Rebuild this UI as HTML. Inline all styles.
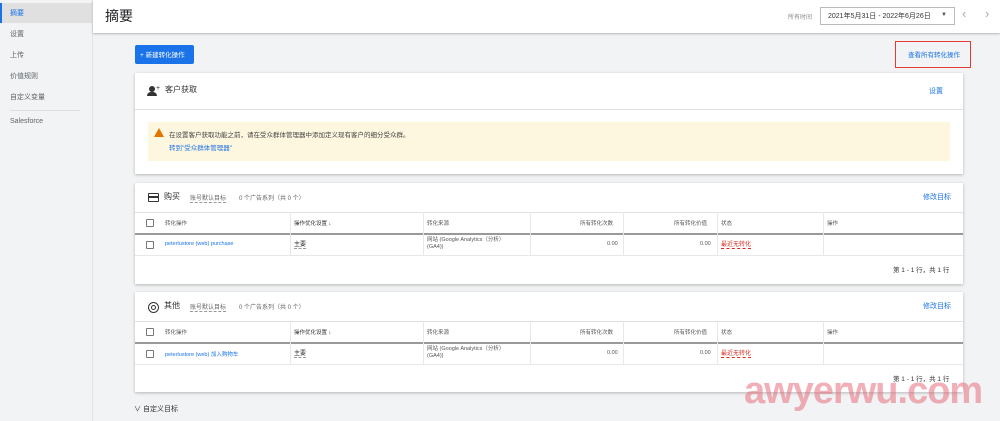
<!DOCTYPE html>
<html><head><meta charset="utf-8"><style>
*{margin:0;padding:0;box-sizing:border-box}
body{width:1000px;height:421px;overflow:hidden;background:#f1f3f4;font-family:"Liberation Sans","Noto Sans CJK SC",sans-serif;color:#3c4043;position:relative;font-size:7px}
.a{position:absolute;white-space:nowrap}
.side{left:0;top:0;width:93px;height:421px;background:#f1f3f4;border-right:1px solid #e4e4e4}
.si{left:10px;font-size:7px;color:#5f6368}
.hdr{left:93px;top:0;width:907px;height:33px;background:#fff;box-shadow:0 1px 2px rgba(0,0,0,.25)}
.card{background:#fff;box-shadow:0 1px 3px rgba(0,0,0,.25)}
.lk{color:#1a73e8}
.cb{width:8px;height:8px;border:1px solid #777;border-radius:1px}
.vl{width:1px;background:#e8e8e8}
.dot{border-bottom:1px dashed #999}
</style></head><body>
<div class="a side"></div>
<div class="a" style="left:0;top:3px;width:92px;height:20px;background:#e0e0e0"></div>
<div class="a" style="left:0;top:3px;width:2px;height:20px;background:#1a73e8"></div>
<div class="a si" style="top:8px;color:#1a73e8">摘要</div>
<div class="a si" style="top:29px">设置</div>
<div class="a si" style="top:50px">上传</div>
<div class="a si" style="top:71px">价值规则</div>
<div class="a si" style="top:92px">自定义变量</div>
<div class="a" style="left:10px;top:110px;width:70px;height:1px;background:#ddd"></div>
<div class="a si" style="top:118px">Salesforce</div>

<div class="a hdr"></div>
<div class="a" style="left:105px;top:6px;font-size:14px;color:#202124">摘要</div>
<div class="a" style="left:788px;top:12px;font-size:6px;color:#888">所有时间</div>
<div class="a" style="left:820px;top:7px;width:135px;height:18px;border:1px solid #bbb;background:#fff"></div>
<div class="a" style="left:828px;top:11px;font-size:7px;color:#333">2021年5月31日 - 2022年6月26日</div>
<div class="a" style="left:941px;top:12px;font-size:6px;color:#555">▼</div>
<div class="a" style="left:962px;top:6px;font-size:13px;color:#aaa">‹</div>
<div class="a" style="left:985px;top:6px;font-size:13px;color:#aaa">›</div>

<div class="a" style="left:135px;top:45px;width:59px;height:19px;background:#1a73e8;border-radius:2px;color:#fff;font-size:6.5px;padding:4px 0 0 5px">+ 新建转化操作</div>
<div class="a" style="left:895px;top:41px;width:76px;height:27px;border:1.5px solid #e53935"></div>
<div class="a lk" style="left:908px;top:49px;font-size:6.5px">查看所有转化操作</div>

<!-- card1 -->
<div class="a card" style="left:135px;top:73px;width:828px;height:101px"></div>
<div class="a" style="left:149px;top:86px;width:6px;height:6px;border-radius:50%;background:#333"></div>
<div class="a" style="left:147px;top:92px;width:10px;height:4px;border-radius:4px 4px 0 0;background:#333"></div>
<div class="a" style="left:156px;top:85px;font-size:7px;color:#333">+</div>
<div class="a" style="left:165px;top:84px;font-size:8px;color:#333">客户获取</div>
<div class="a lk" style="left:929px;top:86px;font-size:7px">设置</div>
<div class="a" style="left:135px;top:109px;width:828px;height:1px;background:#e0e0e0"></div>
<div class="a" style="left:148px;top:122px;width:802px;height:39px;background:#fef7e0"></div>
<div class="a" style="left:154px;top:128px;width:0;height:0;border-left:5px solid transparent;border-right:5px solid transparent;border-bottom:9px solid #e37400"></div>
<div class="a" style="left:169px;top:129px;font-size:6.5px;color:#444">在设置客户获取功能之前，请在受众群体管理器中添加定义现有客户的细分受众群。</div>
<div class="a lk" style="left:169px;top:142px;font-size:6.5px">转到"受众群体管理器"</div>

<!-- card2 -->
<div class="a card" style="left:135px;top:183px;width:828px;height:101px"></div>
<div class="a" style="left:148px;top:193px;width:11px;height:9px;border:1.5px solid #333;border-radius:1px"></div>
<div class="a" style="left:148px;top:196px;width:11px;height:1.5px;background:#333"></div>
<div class="a" style="left:164px;top:191px;font-size:8px;color:#333">购买</div>
<div class="a dot" style="left:190px;top:193px;font-size:6px;color:#666">账号默认目标</div>
<div class="a" style="left:239px;top:193px;font-size:6px;color:#666">0 个广告系列（共 0 个）</div>
<div class="a lk" style="left:923px;top:192px;font-size:7px">修改目标</div>
<div class="a" style="left:135px;top:212px;width:828px;height:1px;background:#e0e0e0"></div>
<div class="a" style="left:135px;top:233px;width:828px;height:1.5px;background:#999"></div>
<div class="a" style="left:135px;top:255px;width:828px;height:1px;background:#e8e8e8"></div>
<div class="a vl" style="left:290px;top:212px;height:43px"></div>
<div class="a vl" style="left:423px;top:212px;height:43px"></div>
<div class="a vl" style="left:530px;top:212px;height:43px"></div>
<div class="a vl" style="left:623px;top:212px;height:43px"></div>
<div class="a vl" style="left:717px;top:212px;height:43px"></div>
<div class="a vl" style="left:823px;top:212px;height:43px"></div>
<div class="a cb" style="left:146px;top:219px"></div>
<div class="a" style="left:165px;top:219px;font-size:5.5px;color:#555">转化操作</div>
<div class="a" style="left:294px;top:219px;font-size:5.5px;color:#333">操作优化设置 ↓</div>
<div class="a" style="left:427px;top:219px;font-size:5.5px;color:#555">转化来源</div>
<div class="a" style="left:580px;top:219px;font-size:5.5px;color:#555">所有转化次数</div>
<div class="a" style="left:674px;top:219px;font-size:5.5px;color:#555">所有转化价值</div>
<div class="a" style="left:721px;top:219px;font-size:5.5px;color:#555">状态</div>
<div class="a" style="left:827px;top:219px;font-size:5.5px;color:#555">操作</div>
<div class="a cb" style="left:146px;top:241px"></div>
<div class="a lk" style="left:165px;top:241px;font-size:5.5px">peterlustore (web) purchase</div>
<div class="a dot" style="left:294px;top:239px;font-size:6px;color:#333">主要</div>
<div class="a" style="left:427px;top:237px;font-size:5.5px;color:#555;line-height:7px">网站 (Google Analytics（分析）<br>(GA4))</div>
<div class="a" style="left:607px;top:241px;font-size:5.5px;color:#555">0.00</div>
<div class="a" style="left:700px;top:241px;font-size:5.5px;color:#555">0.00</div>
<div class="a" style="left:721px;top:239px;font-size:6px;color:#d93025;border-bottom:1px dashed #d93025">最近无转化</div>
<div class="a" style="left:893px;top:264px;font-size:6.5px;color:#333">第 1 - 1 行，共 1 行</div>

<!-- card3 -->
<div class="a card" style="left:135px;top:292px;width:828px;height:100px"></div>
<div class="a" style="left:148px;top:302px;width:11px;height:11px;border:1.5px solid #333;border-radius:50%"></div>
<div class="a" style="left:151px;top:305px;width:5px;height:5px;border:1.5px solid #333;border-radius:50%"></div>
<div class="a" style="left:164px;top:300px;font-size:8px;color:#333">其他</div>
<div class="a dot" style="left:190px;top:302px;font-size:6px;color:#666">账号默认目标</div>
<div class="a" style="left:239px;top:302px;font-size:6px;color:#666">0 个广告系列（共 0 个）</div>
<div class="a lk" style="left:923px;top:301px;font-size:7px">修改目标</div>
<div class="a" style="left:135px;top:321px;width:828px;height:1px;background:#e0e0e0"></div>
<div class="a" style="left:135px;top:342px;width:828px;height:1.5px;background:#999"></div>
<div class="a" style="left:135px;top:364px;width:828px;height:1px;background:#e8e8e8"></div>
<div class="a vl" style="left:290px;top:321px;height:43px"></div>
<div class="a vl" style="left:423px;top:321px;height:43px"></div>
<div class="a vl" style="left:530px;top:321px;height:43px"></div>
<div class="a vl" style="left:623px;top:321px;height:43px"></div>
<div class="a vl" style="left:717px;top:321px;height:43px"></div>
<div class="a vl" style="left:823px;top:321px;height:43px"></div>
<div class="a cb" style="left:146px;top:328px"></div>
<div class="a" style="left:165px;top:328px;font-size:5.5px;color:#555">转化操作</div>
<div class="a" style="left:294px;top:328px;font-size:5.5px;color:#333">操作优化设置 ↓</div>
<div class="a" style="left:427px;top:328px;font-size:5.5px;color:#555">转化来源</div>
<div class="a" style="left:580px;top:328px;font-size:5.5px;color:#555">所有转化次数</div>
<div class="a" style="left:674px;top:328px;font-size:5.5px;color:#555">所有转化价值</div>
<div class="a" style="left:721px;top:328px;font-size:5.5px;color:#555">状态</div>
<div class="a" style="left:827px;top:328px;font-size:5.5px;color:#555">操作</div>
<div class="a cb" style="left:146px;top:350px"></div>
<div class="a lk" style="left:165px;top:350px;font-size:5.5px">peterlustore (web) 加入购物车</div>
<div class="a dot" style="left:294px;top:348px;font-size:6px;color:#333">主要</div>
<div class="a" style="left:427px;top:346px;font-size:5.5px;color:#555;line-height:7px">网站 (Google Analytics（分析）<br>(GA4))</div>
<div class="a" style="left:607px;top:350px;font-size:5.5px;color:#555">0.00</div>
<div class="a" style="left:700px;top:350px;font-size:5.5px;color:#555">0.00</div>
<div class="a" style="left:721px;top:348px;font-size:6px;color:#d93025;border-bottom:1px dashed #d93025">最近无转化</div>
<div class="a" style="left:893px;top:373px;font-size:6.5px;color:#333">第 1 - 1 行，共 1 行</div>

<div class="a" style="left:134px;top:404px;font-size:7px;color:#333">∨ 自定义目标</div>
<div class="a" style="left:744px;top:370px;font-size:38px;font-weight:bold;color:rgba(232,110,125,.55);letter-spacing:-1px">awyerwu.com</div>
</body></html>
